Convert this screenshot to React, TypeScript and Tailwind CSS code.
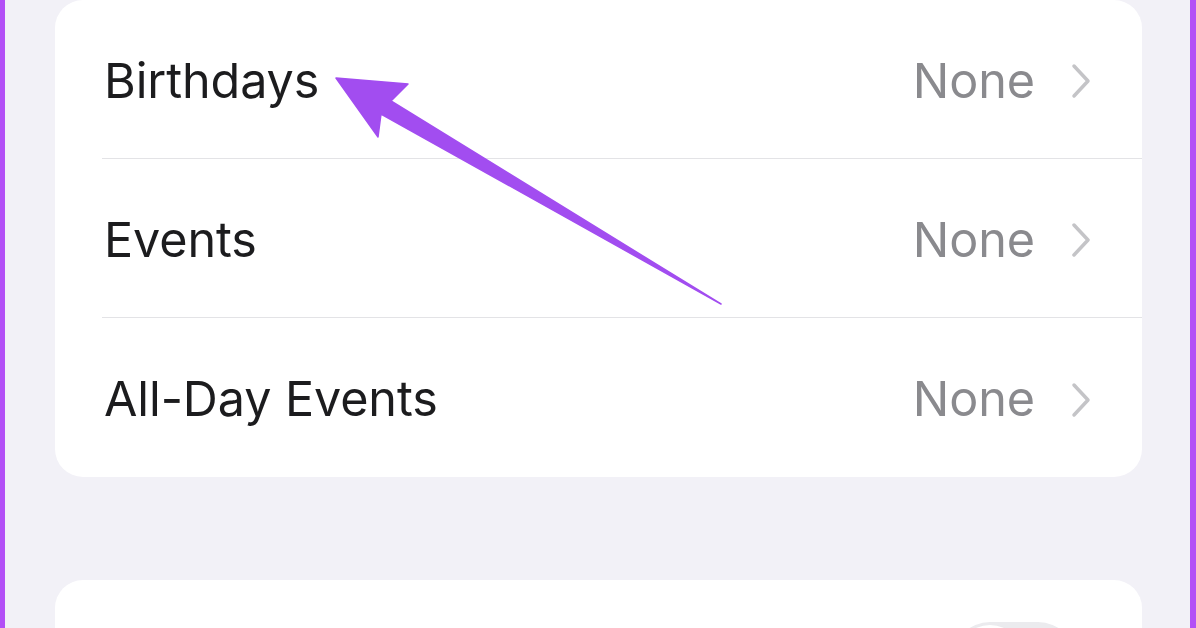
import React from 'react';

const rows = [
  { label: 'Birthdays', value: 'None' },
  { label: 'Events', value: 'None' },
  { label: 'All-Day Events', value: 'None' },
];

function Chevron() {
  return (
    <svg width="22" height="38" viewBox="0 0 22 38" fill="none" className="ml-[35px]">
      <polyline points="4,4 18,19 4,34" stroke="#c4c4c7" strokeWidth="3.5" strokeLinecap="round" strokeLinejoin="round" />
    </svg>
  );
}

export default function App() {
  return (
    <div className="relative w-[1196px] h-[628px] overflow-hidden bg-[#f2f1f7] border-l-[5px] border-r-[6px] border-[#b34ff6] pl-[50px] pr-[48px] font-['Inter',sans-serif]">
      {/* alert settings card */}
      <div className="bg-white rounded-[28px]">
        {rows.map((row, i) => (
          <div key={row.label} className="pl-[47px]">
            <div
              className={`h-[159px] flex items-center pt-[4px] pl-[2px] pr-[50px] ${i < rows.length - 1 ? 'border-b border-[#e3e3e6]' : ''}`}
            >
              <span className="text-[48.5px] text-[#1c1c1e] tracking-[-0.1px]">{row.label}</span>
              <span className="ml-auto text-[48.5px] text-[#8a8a8e] tracking-[-0.1px]">{row.value}</span>
              <Chevron />
            </div>
          </div>
        ))}
      </div>

      {/* next card, cut off at the bottom */}
      <div className="mt-[103px] bg-white rounded-[28px] h-[159px] flex items-center justify-end pr-[66px]">
        <div className="relative w-[124px] h-[76px] rounded-full bg-[#ebebee]">
          <div className="absolute left-[3px] top-[3px] w-[70px] h-[70px] rounded-full bg-white shadow-md" />
        </div>
      </div>

      {/* annotation arrow */}
      <svg className="absolute left-[-5px] top-0" width="1196" height="628" viewBox="0 0 1196 628">
        <polygon
          points="336,78 408,84 391,101 721,304 381,114 378,137"
          fill="#a24df0"
          stroke="#a24df0"
          strokeWidth="1.5"
          strokeLinejoin="round"
        />
      </svg>
    </div>
  );
}
